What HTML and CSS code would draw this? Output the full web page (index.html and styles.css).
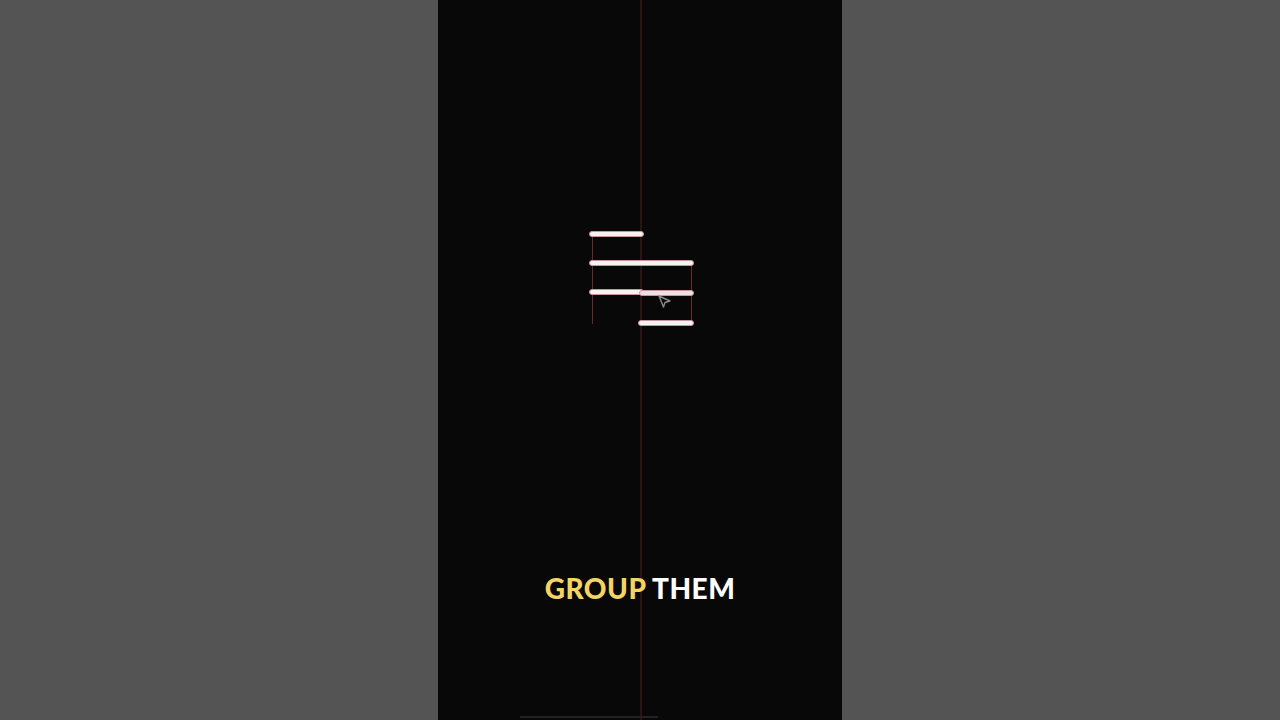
FILE: index.html
```html
<!DOCTYPE html>
<html>
<head>
<meta charset="utf-8">
<link rel="stylesheet" href="styles.css">
</head>
<body>
<div class="page">
  <div class="side"></div>
  <div class="stage">
    <div class="guide guide-center"></div>
    <div class="guide guide-left"></div>
    <div class="guide guide-right"></div>
    <div class="bar bar1"></div>
    <div class="bar bar2"></div>
    <div class="bar bar3"></div>
    <div class="bar bar3b"></div>
    <div class="bar bar4"></div>
    <svg class="cursor" width="16" height="16" viewBox="0 0 16 16">
      <path d="M2 2 L13 7 L8 8.5 L6.5 13 Z" fill="none" stroke="#8a8a8a" stroke-width="1.4" stroke-linejoin="round"/>
    </svg>
    <div class="caption"><span class="hl">GROUP</span> THEM</div>
    <div class="scrub"></div>
  </div>
  <div class="side"></div>
</div>
</body>
</html>
```
FILE: styles.css
```css
html, body {
  margin: 0;
  padding: 0;
  background: #555555;
}
.page {
  display: flex;
  width: 1280px;
  height: 720px;
  overflow: hidden;
}
.side {
  width: 438px;
  height: 720px;
  background: #545454;
}
.stage {
  position: relative;
  width: 404px;
  height: 720px;
  background: #080808;
}
.guide {
  position: absolute;
  width: 1px;
  background: #6a2830;
}
.guide-center {
  left: 202px;
  top: 0;
  width: 2px;
  height: 720px;
  background: #2c1215;
}
.guide-left {
  left: 154px;
  top: 234px;
  height: 90px;
}
.guide-right {
  left: 253px;
  top: 263px;
  height: 60px;
}
.bar {
  position: absolute;
  height: 4px;
  background: #f6f2f2;
  border: 1px solid #c9959c;
  border-radius: 4px;
}
.bar1 { left: 151px; top: 231px; width: 53px; }
.bar2 { left: 151px; top: 260px; width: 103px; }
.bar3 { left: 151px; top: 289px; width: 53px; }
.bar3b { left: 201px; top: 290px; width: 53px; background: #eedfe1; }
.bar4 { left: 200px; top: 320px; width: 54px; }
.cursor {
  position: absolute;
  left: 219px;
  top: 294px;
}
.caption {
  position: absolute;
  left: 0;
  right: 0;
  top: 571px;
  text-align: center;
  font-family: Lato, "Open Sans", sans-serif;
  font-weight: 900;
  font-size: 28px;
  line-height: 34px;
  color: #ffffff;
  letter-spacing: 0.5px;
}
.hl { color: #f3d464; }
.scrub {
  position: absolute;
  left: 82px;
  top: 716px;
  width: 138px;
  height: 2px;
  background: #222222;
}
```
